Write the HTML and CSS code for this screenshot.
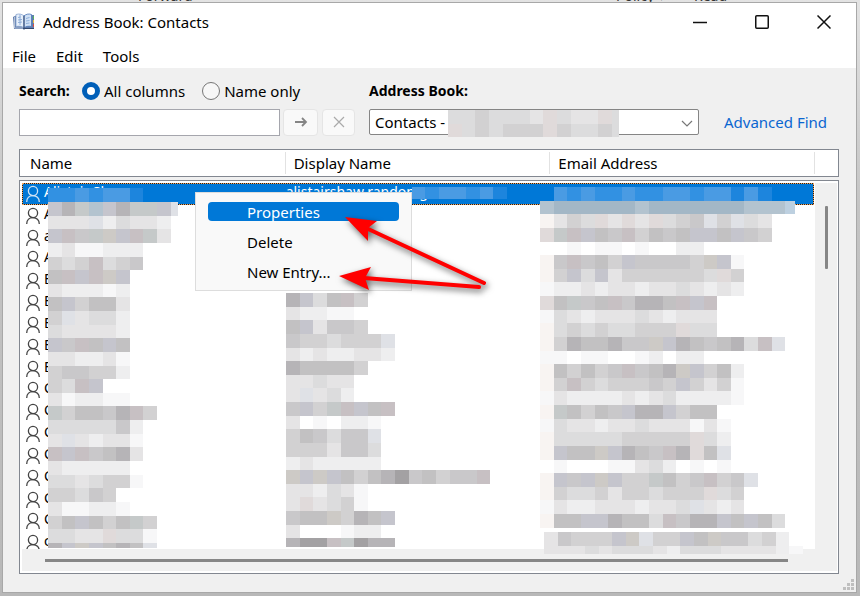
FILE: index.html
```html
<!DOCTYPE html>
<html lang="en">
<head>
<meta charset="utf-8">
<title>Address Book: Contacts</title>
<link rel="stylesheet" href="styles.css">
</head>
<body>
<div class="behind"><span class="behind-forward">Forward</span><span class="behind-policy">Policy ▾</span><span class="behind-read">Read</span></div>
<main class="window">
  <header class="titlebar">
    <svg class="book" viewBox="0 0 22 18" aria-hidden="true">
      <path d="M0 4 1 16 10 16 11 17 12 16 21 16 21 2 18 2 4 2z" fill="#5f7cae"/>
      <path d="M3 1.500C6 .5 9 1 11 3V15C9 13 6 13 3 13.500z" fill="#e6effa" stroke="#8ba6cf" stroke-width=".8"/>
      <path d="M11 3C13 1 16 .5 18.500 1.500V13.500C16 13 13 13 11 15z" fill="#cfe0f5" stroke="#4d76b6" stroke-width=".8"/>
      <path d="M5 4.500 7.500 4M5 7 9 6.500M5 9.500 9 9M7 1.500V12M13 5.500 16.500 4.500M13 8 16.500 7.500M13 10.500 16.500 10" stroke="#7ba0d0" stroke-width=".8" fill="none"/>
      <path d="M1.500 4V15H10" stroke="#b5c1d5" fill="none"/>
      <path d="M11 3V15M10 15.500H21" stroke="#34496f"/>
      <path d="M20.500 3V6" stroke="#57b45d"/><path d="M20.500 7V10" stroke="#edbd43"/><path d="M20.500 11V14" stroke="#d94d43"/>
    </svg>
    <h1>Address Book: Contacts</h1>
    <div class="controls">
      <button type="button" aria-label="Minimize"><svg viewBox="0 0 14 14"><path d="M0 7.500H14"/></svg></button>
      <button type="button" aria-label="Maximize"><svg viewBox="0 0 14 14"><rect x=".75" y=".75" width="12.500" height="12.500" rx="1"/></svg></button>
      <button type="button" aria-label="Close"><svg viewBox="0 0 14 14"><path d="M.5.5 13.500 13.500M13.500.5.5 13.500"/></svg></button>
    </div>
  </header>
  <nav class="menubar"><button type="button">File</button><button type="button">Edit</button><button type="button">Tools</button></nav>
  <section class="content">
    <form class="search">
      <div class="options">
        <label class="heading" for="query">Search:</label>
        <input type="radio" name="scope" id="all" checked><label for="all">All columns</label>
        <input class="second" type="radio" name="scope" id="only"><label for="only">Name only</label>
      </div>
      <label class="heading" for="book">Address Book:</label>
      <div class="query">
        <input type="text" id="query">
        <button class="go" type="button" aria-label="Search"><svg viewBox="0 0 14 12"><path d="M1 6H12M8 2 12 6 8 10" stroke="#858585" stroke-width="1.800"/></svg></button>
        <button class="clear" type="button" aria-label="Clear"><svg viewBox="0 0 14 12"><path d="M2 1 12 11M12 1 2 11" stroke="#aaa" stroke-width="1.200"/></svg></button>
      </div>
      <div class="book-row">
        <div class="combo">
          <select id="book"><option>Contacts -</option></select>
          <svg class="chevron" viewBox="0 0 12 8"><path d="M1 1 6 6 11 1"/></svg>
          <svg class="redact-combo" id="comboMask" viewBox="0 0 171 27" aria-hidden="true"></svg>
        </div>
        <a href="#">Advanced Find</a>
      </div>
    </form>
    <table class="columns"><thead><tr><th>Name</th><th>Display Name</th><th>Email Address</th><th></th></tr></thead></table>
    <div class="list">
      <div class="viewport"><table class="contacts"><tbody id="rows"></tbody></table></div>
      <div class="vscroll"><div class="vthumb"></div></div>
      <div class="hscroll"><div class="hthumb"></div></div>
      <svg class="overlay" id="listMask" viewBox="0 0 820 394" preserveAspectRatio="xMinYMin meet" aria-hidden="true"></svg>
      <div class="context" role="menu">
        <button type="button" role="menuitem" class="active">Properties</button>
        <button type="button" role="menuitem">Delete</button>
        <button type="button" role="menuitem">New Entry...</button>
      </div>
      <svg class="overlay arrows" viewBox="19 180 820 394" preserveAspectRatio="xMinYMin meet" aria-hidden="true">
        <g><path d="M366 228 484 283" class="shaft"/><path d="M345 217 377 221 368 228 368 241z"/></g>
        <g><path d="M364 278 479 287" class="shaft"/><path d="M339 276 371 267 365 278 369 290z"/></g>
      </svg>
    </div>
  </section>
  <svg class="grip" viewBox="0 0 11 11" aria-hidden="true"><path d="M8 0h3v3h-3zM4 4h3v3h-3zM8 4h3v3h-3zM0 8h3v3h-3zM4 8h3v3h-3zM8 8h3v3h-3z"/></svg>
</main>
<script src="app.js"></script>
</body>
</html>
```
FILE: styles.css
```css
* { box-sizing: border-box; }
body {
  margin: 0;
  height: 100vh;
  padding: 0 3px 3px 2px;
  display: flex;
  flex-direction: column;
  background: linear-gradient(#e3e3e3, #c4c4c4 35%, #b8b8b8);
  font: 15px/20px "Noto Sans", sans-serif;
  color: #000;
}
button, input, select { font: inherit; color: inherit; margin: 0; }
button { border: 0; padding: 0; background: none; }
.behind { position: relative; flex: none; height: 2px; overflow: hidden; color: #333; }
.behind span { position: absolute; bottom: -4px; font-size: 14px; }
.behind-forward { left: 136px; }
.behind-policy { left: 614px; }
.behind-read { left: 692px; }
.window {
  position: relative;
  flex: 1;
  min-height: 0;
  display: flex;
  flex-direction: column;
  border: 1px solid #a8a8a8;
  background: #f0f0f0;
}
.titlebar { display: flex; align-items: center; height: 38px; padding: 0 1px 0 10px; background: #fff; }
.book { width: 22px; height: 18px; margin-right: 8px; }
h1 { margin: 0; font-size: 15px; line-height: 20px; font-weight: 400; }
.controls { display: flex; margin-left: auto; }
.controls button { width: 62px; height: 38px; display: grid; place-items: center; }
.controls svg { width: 14px; height: 14px; fill: none; stroke: #111; stroke-width: 1.5; }
.menubar { display: flex; gap: 20px; height: 27px; padding: 2px 0 0 9px; background: #fff; }
.content { flex: 1; min-height: 0; display: flex; flex-direction: column; padding: 12px 17px 18px 16px; }
.search { display: grid; grid-template-columns: 336px 1fr; column-gap: 14px; row-gap: 6px; }
.options { display: flex; align-items: center; height: 22px; }
.heading { font-size: 14px; font-weight: 700; line-height: 22px; }
.options .heading { width: 63px; }
input[type="radio"] { appearance: none; width: 18px; height: 18px; margin-right: 4px; border: 1px solid #767676; border-radius: 50%; background: #f7f7f7; }
input[type="radio"]:checked { border: 5px solid #005fb8; background: #fff; }
input.second { margin-left: 17px; }
.query { display: flex; align-items: center; height: 28px; }
.query input { flex: 1; min-width: 0; height: 27px; border: 1px solid #a5a6ad; background: #fff; }
.query button { height: 27px; display: grid; place-items: center; border: 1px solid #e5e5e5; border-radius: 4px; background: #f9f9f9; }
.query svg { width: 14px; height: 12px; fill: none; }
.go { width: 35px; margin-left: 3px; }
.clear { width: 33px; margin-left: 4px; }
.book-row { display: flex; align-items: center; gap: 25px; }
.combo { position: relative; width: 330px; }
select { appearance: none; display: block; width: 100%; height: 26px; padding: 0 5px 1px; border: 1px solid #858585; border-radius: 2px; background: #fff; }
.chevron { position: absolute; right: 6px; top: 11px; width: 12px; height: 8px; fill: none; stroke: #777; stroke-width: 1.2; }
.redact-combo { position: absolute; left: 79px; top: 1px; width: 171px; height: 27px; }
a { color: #0a66d0; text-decoration: none; }
.columns { display: block; margin-top: 13px; border: 1px solid #828790; background: #fff; }
.columns thead { display: block; }
.columns tr { display: grid; grid-template-columns: 266fr 265fr 265fr 23px; height: 26px; align-items: center; }
th { margin: 2px 0; padding: 0 0 0 8px; height: 22px; border-right: 1px solid #e2e2e2; text-align: left; font-weight: 400; line-height: 22px; }
th:first-child { padding-left: 10px; }
th:last-child { border: 0; }
.list {
  position: relative;
  flex: 1;
  min-height: 0;
  margin-top: 3px;
  padding: 2px 1px 2px 2px;
  display: grid;
  grid-template: minmax(0, 1fr) 22px / minmax(0, 1fr) 22px;
  border: 1px solid #828790;
  background: #fff;
}
.viewport { overflow: hidden; background: #fff; }
.contacts { display: block; height: calc(100% + 5px); }
.contacts tbody { display: flex; flex-direction: column; height: 100%; }
.contacts tr { flex: 1; display: grid; grid-template-columns: 264fr 529fr; overflow: hidden; }
.contacts td { display: flex; align-items: flex-start; padding: 0; overflow: hidden; font-size: 14px; line-height: 18px; }
.contacts svg { flex: none; width: 14px; height: 18px; margin: 2px 4px 0; fill: none; stroke: #444; stroke-width: 1.3; }
.contacts .selected { margin-right: 1px; color: #fff; background: #0078d7; box-shadow: inset 0 0 0 1px #222; outline: 1px dotted #f0a35c; outline-offset: -1px; }
.selected svg { stroke: #cfe3f5; }
.vscroll, .hscroll { background: #f0f0f0; }
.vthumb { width: 3px; height: 63px; margin: 23px 0 0 10px; border-radius: 1px; background: #868686; }
.hscroll { grid-column: 1 / 3; }
.hthumb { height: 3px; margin: 10px 49px 0 23px; background: #868686; }
.overlay { position: absolute; left: -1px; top: -1px; width: 820px; height: 394px; pointer-events: none; }
.context {
  position: absolute;
  left: 175px;
  top: 11px;
  width: 217px;
  padding: 9px 12px;
  display: flex;
  flex-direction: column;
  gap: 11px;
  border: 1px solid #ddd;
  background: #f9f9f9;
}
.context button { height: 19px; padding-left: 39px; border-radius: 4px; text-align: left; line-height: 18px; }
.context .active { color: #fff; background: #0078d7; }
.arrows g { fill: #f00; filter: drop-shadow(2px 3px 3px rgba(0, 0, 0, .6)); }
.arrows .shaft { fill: none; stroke: #f00; stroke-width: 4; stroke-linecap: round; }
.grip { position: absolute; right: 2px; bottom: 2px; width: 11px; height: 11px; fill: #bfbfbf; }
```
FILE: app.js
```js
const tones = {
  1: '#f7f7f8', 2: '#eeeeef', 3: '#e5e4e5', 4: '#dcdcdd', 5: '#d2d1d2', 6: '#c9c8ca', 7: '#c2c1c2', 8: '#b6b4b7', 9: '#a3a1a3',
  p: '#c7c0c3', b: '#c5c5cd', g: '#c5c9c9', y: '#cdcac6', P: '#e0dada', B: '#dfe1e6', w: '#f8f4f2',
  q: '#4a9be3', s: '#3291e2', r: '#1d85dd', t: '#b3c3cf', u: '#a3b7c6', T: '#bdd0e0'
};
const cell = 13.63;

// Draws one block of masked cells; maxY cuts the last row short.
function mask(target, x0, y0, rows, maxX, maxY) {
  rows.forEach((row, r) => [...row].forEach((tone, c) => {
    if (tone === '.') return;
    const x = Math.round(x0 + c * cell), y = Math.round(y0 + r * cell);
    const right = Math.min(maxX, Math.round(x0 + (c + 1) * cell));
    const bottom = Math.min(maxY, Math.round(y0 + (r + 1) * cell));
    const rect = document.createElementNS('http://www.w3.org/2000/svg', 'rect');
    Object.entries({ x, y, width: right - x, height: bottom - y, fill: tones[tone] })
      .forEach(([key, value]) => rect.setAttribute(key, value));
    target.append(rect);
  }));
}

const list = document.getElementById('listMask');
mask(list, 29, 8.4, [
  'ssqsqqr', 'b8gtb8ggbB', '333B24332', 'bp6gybpg3', '2311222', '545p456', '7pbpyb', '322212', '7b5773',
  '5B3442', '433332', 'b6p7b7', '332231', '566552', '54pb', '312211', 'g57768p5', '4444462', '3B32331',
  'pbp6783', '322222', '4434551', '55465', '311221', '57b757g5', '4433P441', '8byb787B'
], 159, 368);
mask(list, 392.7, 7, ['qsqqsqr'], 488, 19);
mask(list, 267, 113, [
  '8b47p5', '32211', '7b3665', '6554555B', '32322332', '877775', '33433', '3B342', '6b5gpb7p', '3.1.221',
  '576466B', '5553664', '2322222', 'ybyb7578967566p', '332431', '3P3451', '677y587b', '3...122', '899pg988'
], 800, 367);
mask(list, 521, 7, [
  '.qsqssqssqqsqqrqr', 'tuuuuuutuuuuuuutttT', 'w354P3P3P456B5B43', 'Pgpb76p5767bb7b65', '..1.11.1..22',
  'w6p675b66665yb1', 'w5b4b35555554P5', '122323323343232', 'P7g67p6887pbp', '1432333432333', 'w454544555P44',
  'w5877866yb876784pB', '11.11..12.22', 'w75756p678yb572', 'w5p5455565b5351', '132222323422221',
  'wg7576b88b577', '14332334333131', 'w4444455555P42', 'wb77yb876p8P7B', '.1...11342.1.1',
  'wb6byb55g756p56B', 'w54453554555P45', '13223332334B323', 'w77bb8774p688b7b74'
], 776, 352);
mask(list, 525, 352, ['36555byB55b7y66452', '3334344432444333321'], 784, 374);
mask(document.getElementById('comboMask'), 0, 0, ['4454443P433P4', 'P454555P54454'], 171, 27);

const person = '<svg viewBox="0 0 14 18" aria-hidden="true"><circle cx="7" cy="6" r="4.600"/><path d="M.7 17C.7 13 3.500 10.600 7 10.600S13.300 13 13.300 17"/></svg>';
const names = ['Alistair Shaw', 'A', 'a', 'A', 'B', 'B', 'B', 'B', 'B', 'C', 'C', 'C', 'C', 'C', 'C', 'C', 'c'];
document.getElementById('rows').innerHTML = names.map((name, i) =>
  `<tr${i ? '' : ' class="selected"'}><td>${person}${name}</td><td>${i ? '' : 'alistairshaw.randomg'}</td></tr>`).join('');
```
